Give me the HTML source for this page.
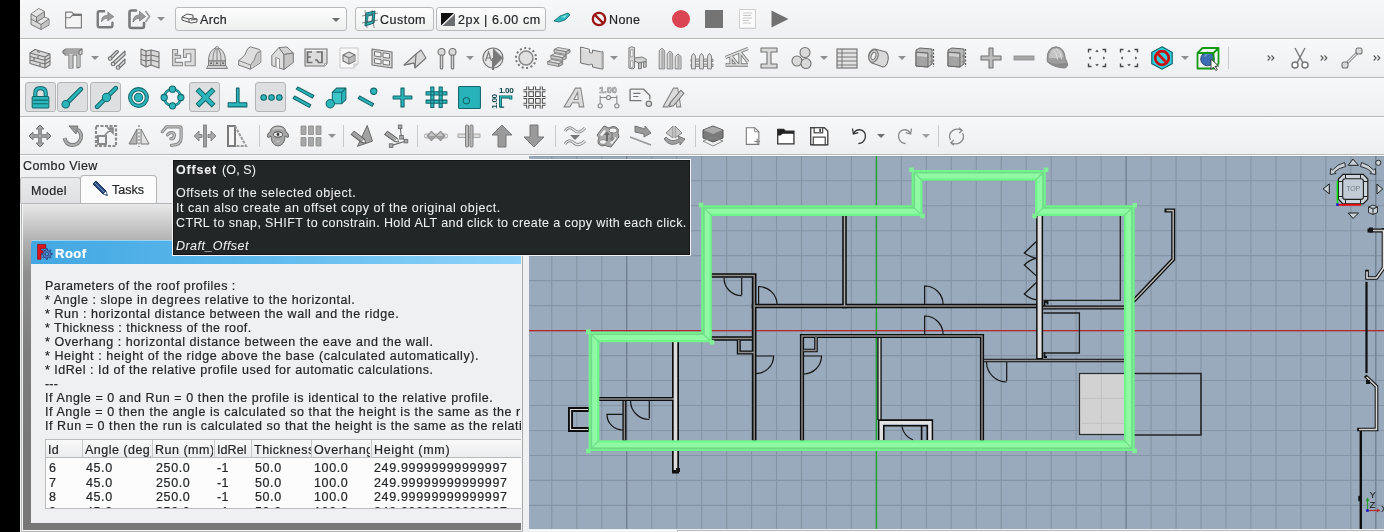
<!DOCTYPE html>
<html><head><meta charset="utf-8">
<style>
*{margin:0;padding:0;box-sizing:border-box}
html{will-change:transform}
html,body{width:1384px;height:532px;overflow:hidden;background:#eff0f1;font-family:"Liberation Sans",sans-serif;font-size:12.5px;letter-spacing:0.42px;color:#232627;position:relative}
.a{position:absolute;white-space:nowrap}
.t{line-height:15px;will-change:transform;-webkit-text-stroke:0.2px currentColor}
.row{position:absolute;left:20px;width:1364px;background:linear-gradient(#f7f8f9,#eeeff0)}
.sep{position:absolute;left:20px;width:1364px;height:2px;background:#b6b8b7;border-bottom:1px solid #fcfcfc;height:2px}
.ic{position:absolute;overflow:visible}
.dd{position:absolute;width:0;height:0;border-left:4px solid transparent;border-right:4px solid transparent;border-top:4px solid #8d8f90}
.vs{position:absolute;width:1px;height:22px;background:#c9cacb}
.btn{position:absolute;border:1px solid #b9babb;border-radius:3px;background:linear-gradient(#fdfdfd,#eeefef)}
.pr{position:absolute;border:1px solid #b4b5b6;border-radius:3px;background:#dedfe0}
</style></head><body>

<div class="a" style="left:0;top:0;width:20px;height:532px;background:#000"></div>
<div class="row" style="top:0;height:38px"></div><div class="row" style="top:39px;height:38px"></div><div class="row" style="top:78px;height:38px"></div><div class="row" style="top:117px;height:37px"></div>
<div class="sep" style="top:38px"></div><div class="sep" style="top:77px"></div><div class="sep" style="top:116px"></div><div class="sep" style="top:154px"></div>
<svg class="ic" style="left:28.0px;top:7.0px" width="24" height="24" viewBox="0 0 24 24"><path fill="#d6d6d6" stroke="#767676" stroke-width="1" stroke-linejoin="round" d="M3 7 L10.7 1.5 L16.5 4.5 L16.5 10 L21 12 L21 18 L13 22.5 L3 17.5 Z"/><path fill="#e6e6e6" d="M3.5 7 L10.7 2 L16 4.7 L8.5 9.7Z M9 15 L16.5 10.5 L20.5 12.3 L13 17Z"/><path fill="#c2c2c2" d="M9 10.3 L16 5.5 V10 L9 14.7Z M13.5 17.8 L20.5 12.8 V17.7 L13.5 22Z"/><path fill="none" stroke="#767676" stroke-width="1" stroke-linejoin="round" d="M3 7 L8.5 10 L16.5 4.5 M8.5 10 V15 L3 12 M8.5 15 L16.5 10 M8.5 15 L13 17.5 L21 12 M13 17.5 V22.5"/></svg>
<svg class="ic" style="left:62.5px;top:8.5px" width="21" height="21" viewBox="0 0 24 24"><path fill="#f4f4f4" stroke="#7a7a7a" stroke-width="1.3" d="M3 3.5 H10 L12.5 6 H21 V21.5 H3 Z"/><path fill="none" stroke="#7a7a7a" stroke-width="1.3" d="M3 10 H8 L11.5 6.5"/><rect x="11" y="5.5" width="10" height="2.5" fill="#777"/></svg>
<svg class="ic" style="left:95.0px;top:8.0px" width="22" height="22" viewBox="0 0 24 24"><path fill="none" stroke="#7a7a7a" stroke-width="2.6" stroke-linecap="round" d="M10 3.5 H5 Q3 3.5 3 5.5 V19 Q3 21 5 21 H17 Q19 21 19 19 V16"/><path fill="#9a9a9a" stroke="#7a7a7a" stroke-width="0.8" d="M7 15 Q7 8 14 8 V4.5 L20.5 9.5 L14 14 V11 Q10 11 7 15 Z"/></svg>
<svg class="ic" style="left:127.0px;top:7.0px" width="24" height="24" viewBox="0 0 24 24"><path fill="none" stroke="#7a7a7a" stroke-width="2.6" stroke-linecap="round" d="M9 3.5 H4.5 Q2.5 3.5 2.5 5.5 V19 Q2.5 21 4.5 21 H15 Q17 21 17 19 V16"/><path fill="#9a9a9a" stroke="#7a7a7a" stroke-width="0.8" d="M6 15 Q6 8 12.5 8 V4.5 L18.5 9.5 L12.5 14 V11 Q9 11 6 15 Z"/><path fill="none" stroke="#9a9a9a" stroke-width="1.6" d="M18.5 4 L22.5 9.5 L18.5 15"/></svg>
<div class="dd" style="left:157.0px;top:17.0px;border-top-color:#8d8f90"></div>
<div class="btn" style="left:175px;top:7px;width:172px;height:24px"></div>
<svg class="ic" style="left:181px;top:12px" width="17" height="12" viewBox="0 0 17 12"><path fill="#f4f4f4" stroke="#555" stroke-width="1" d="M1 5 L6 2 L12 3 L12 6 L16 7 L16 10 L10 11 L1 8 Z M1 5 L8 7 L12 6 M8 7 V10 M10 8 L16 7"/></svg>
<div class="a t" style="left:200px;top:13px;letter-spacing:0.346px;">Arch</div>
<div class="dd" style="left:331.5px;top:17.5px;border-top-color:#6b6b6b"></div>
<div class="btn" style="left:355px;top:7px;width:79px;height:24px"></div>
<svg class="ic" style="left:361px;top:10px" width="18" height="18" viewBox="0 0 18 18"><path fill="#2bb6bc" stroke="#13666b" stroke-width="1" d="M5 3 L14 1 L13 13 L4 16 Z"/><path fill="#f0f0f0" stroke="#13666b" stroke-width="0.8" d="M7 6 L11.5 5 L11 11 L6.5 12.5 Z"/><path stroke="#444" stroke-width="0.6" fill="none" d="M1 6 L17 3 M1 13 L17 10 M4 0 L6 18 M11 0 L13 18"/></svg>
<div class="a t" style="left:380px;top:13px;letter-spacing:0.485px;">Custom</div>
<div class="btn" style="left:436px;top:7px;width:110px;height:24px"></div>
<svg class="ic" style="left:441px;top:13px" width="14" height="13" viewBox="0 0 14 13"><path fill="#111" d="M0 0 H13 L0 12.5 Z"/><path fill="#6b6e71" d="M14 1 V13 H1.5 Z"/></svg>
<div class="a t" style="left:458px;top:13px;letter-spacing:0.618px;">2px | 6.00 cm</div>
<svg class="ic" style="left:553px;top:12px" width="18" height="12" viewBox="0 0 18 12"><path fill="#2bb6bc" stroke="#13666b" stroke-width="0.8" d="M1 9 L7 4 L15 1 L17 3 L12 8 L6 10 Z"/><path fill="#7fe0e4" d="M8 5 L14 2.5 L12 6 Z"/></svg>
<svg class="ic" style="left:591px;top:11px" width="16" height="16" viewBox="0 0 16 16"><circle cx="8" cy="8" r="6.2" fill="none" stroke="#9c1717" stroke-width="2.3"/><path stroke="#9c1717" stroke-width="2.3" d="M3.6 3.6 L12.4 12.4"/></svg>
<div class="a t" style="left:609px;top:13px;letter-spacing:0.357px;">None</div>
<div class="a" style="left:672px;top:10px;width:18px;height:18px;border-radius:50%;background:#da4453"></div>
<div class="a" style="left:705px;top:10px;width:18px;height:18px;background:#747474"></div>
<svg class="ic" style="left:739px;top:9px" width="17" height="20" viewBox="0 0 17 20"><path fill="#fbfbfb" stroke="#cfcfcf" stroke-width="1" d="M0.5 0.5 H16.5 V19.5 H0.5 Z"/><path fill="#ececec" d="M1 18 H16 V19 H1Z"/><path stroke="#c8c8c8" stroke-width="1" d="M4 4 H13 M4 6.5 H12 M4 9 H13 M4 11.5 H10 M4 14 H12"/></svg>
<svg class="ic" style="left:771px;top:10px" width="18" height="18" viewBox="0 0 18 18"><path fill="#717171" d="M0.5 0.5 L17.5 9 L0.5 17.5 Z"/></svg>
<svg class="ic" style="left:27.5px;top:46.0px" width="24" height="24" viewBox="0 0 24 24"><path fill="#d9d9d9" stroke="#737373" stroke-width="1.1" stroke-linejoin="round" d="M2 7 L7 3.5 L22 8 L22 19 L17 22 L2 17.5 Z"/><path fill="none" stroke="#747474" stroke-width="1.2" stroke-linejoin="round" d="M2 7 L17 11 L22 8 M17 11 V22 M2 10.5 L17 14.5 L22 11.5 M2 14 L17 18 L22 15 M9 5.5 L12 6.5 M10 9 V12.5 M6 12 V15.5 M12 16 V20"/></svg>
<svg class="ic" style="left:61.0px;top:46.0px" width="24" height="24" viewBox="0 0 24 24"><path fill="#d9d9d9" stroke="#737373" stroke-width="1.1" stroke-linejoin="round" d="M2 5 L5 3 L21 3 L21 8 L19 9 L19 21 L16 22 L16 9 L12 9 L12 22 L8 22 L8 9 L4 9 L4 8 L2 7 Z"/><path fill="none" stroke="#747474" stroke-width="1.2" stroke-linejoin="round" d="M2 5 L18 5 L21 3 M18 5 V9 M2 7 L18 7"/><rect x="8.5" y="9" width="2.5" height="13" fill="#c2c2c2"/><rect x="16.5" y="9" width="2" height="12" fill="#c2c2c2"/></svg>
<svg class="ic" style="left:105.7px;top:46.0px" width="24" height="24" viewBox="0 0 24 24"><path fill="#d9d9d9" stroke="#737373" stroke-width="1.1" stroke-linejoin="round" d="M3 12 L10 5 Q12 4 12.5 6 L5.5 13 Q4 14.5 3 12 Z"/><path fill="#d9d9d9" stroke="#737373" stroke-width="1.1" stroke-linejoin="round" d="M6 17 L19 5 L19 9 L8 19 Q6 20 6 17 Z"/><path fill="#d9d9d9" stroke="#737373" stroke-width="1.1" stroke-linejoin="round" d="M11 21 L19 13 L19 17 L13 22.5 Q11 23.5 11 21 Z"/><circle cx="4.2" cy="12.5" r="1.8" fill="#d9d9d9" stroke="#737373" stroke-width="1.1" stroke-linejoin="round"/><circle cx="7" cy="18" r="1.8" fill="#d9d9d9" stroke="#737373" stroke-width="1.1" stroke-linejoin="round"/><circle cx="12" cy="21.5" r="1.8" fill="#d9d9d9" stroke="#737373" stroke-width="1.1" stroke-linejoin="round"/></svg>
<svg class="ic" style="left:138.0px;top:46.0px" width="24" height="24" viewBox="0 0 24 24"><path fill="#d9d9d9" stroke="#737373" stroke-width="1.1" stroke-linejoin="round" d="M3 3 L8 5 L13 4 L21 6 L21 22 L13 19 L8 21 L3 18 Z"/><path fill="none" stroke="#747474" stroke-width="1.2" stroke-linejoin="round" d="M8 5 V21 M13 4 V19 M3 8.5 L8 10 L13 9 L21 11 M3 13.5 L8 15 L13 14 L21 16"/></svg>
<svg class="ic" style="left:172.0px;top:46.0px" width="24" height="24" viewBox="0 0 24 24"><path fill="#dcdcdc" stroke="#8a8a8a" stroke-width="1.1" stroke-linejoin="round" d="M0.6 3.5 H5.6 V7.7 H3.2 V9.4 H8.7 V12.2 H3.2 V16.4 H10.5 V19.8 H0.6 Z"/><path fill="#dcdcdc" stroke="#8a8a8a" stroke-width="1.1" stroke-linejoin="round" d="M11.5 3.2 H23.2 V19.8 H13.1 V15.7 H18.8 V7.7 H14.3 V11.5 H11.5 Z"/></svg>
<svg class="ic" style="left:205.0px;top:46.0px" width="24" height="24" viewBox="0 0 24 24"><path fill="#dadada" stroke="#7a7a7a" stroke-width="1" d="M3.5 15 Q3.5 4 12 1.2 Q20.5 4 20.5 15 Z"/><path fill="none" stroke="#7a7a7a" stroke-width="0.9" d="M12 1.2 V15 M8 15 Q7.5 6 12 1.2 M16 15 Q16.5 6 12 1.2"/><rect x="3.5" y="15" width="17" height="4.5" fill="#c4c4c4" stroke="#7a7a7a" stroke-width="0.9"/><path fill="none" stroke="#8a8a8a" stroke-width="0.8" d="M8.5 15 V19.5 M15.5 15 V19.5"/><circle cx="6" cy="17.2" r="0.9" fill="#555"/><circle cx="12" cy="17.2" r="0.9" fill="#555"/><circle cx="18" cy="17.2" r="0.9" fill="#555"/><path fill="#d0d0d0" stroke="#7a7a7a" stroke-width="0.9" d="M3 19.5 H21 L22.5 22.5 H1.5 Z"/><ellipse cx="12" cy="1.8" rx="1.6" ry="1.2" fill="#ddd" stroke="#7a7a7a" stroke-width="0.8"/></svg>
<svg class="ic" style="left:238.0px;top:46.0px" width="24" height="24" viewBox="0 0 24 24"><path fill="#dedede" stroke="#7a7a7a" stroke-width="1" stroke-linejoin="round" d="M0.7 14.5 L5.5 10.5 Q7.5 8.5 8.5 5 Q9.5 2 12.5 0.8 L21.5 3.5 L22.8 5.5 V16.5 L12.5 23.2 L0.7 19 Z"/><path fill="#c8c8c8" d="M12.8 19.2 Q17 14 18 9 Q19 5.8 22.4 5.6 V16.3 L12.8 22.7 Z"/><path fill="none" stroke="#7a7a7a" stroke-width="0.9" d="M0.7 14.5 L12.5 19 V23.2 M12.5 19 Q17 14 18 9 Q19 5.5 22.8 5.5"/></svg>
<svg class="ic" style="left:270.7px;top:46.0px" width="24" height="24" viewBox="0 0 24 24"><path fill="#dedede" stroke="#7a7a7a" stroke-width="1" stroke-linejoin="round" d="M0.8 9.5 L8 1.5 L13 8.5 V23.5 L0.8 19.5 Z"/><path fill="#d2d2d2" stroke="#7a7a7a" stroke-width="1" stroke-linejoin="round" d="M8 1.5 L16 1 L22.3 7 L13 8.5 Z"/><path fill="#c6c6c6" stroke="#7a7a7a" stroke-width="1" stroke-linejoin="round" d="M13 8.5 L22.3 7 V16.5 L13 23.5 Z"/><path fill="#fff" stroke="#8a8a8a" stroke-width="0.9" d="M4.5 21 V11.5 L8.5 12.8 V22.3"/><path fill="#b8b8b8" d="M4.5 11.5 L6 12 V21.5 L4.5 21Z"/></svg>
<svg class="ic" style="left:303.8px;top:46.0px" width="24" height="24" viewBox="0 0 24 24"><path fill="#dcdcdc" stroke="#777" stroke-width="1.1" d="M1 3 H23 V17.5 L20.5 20 H1 Z"/><path fill="#eee" stroke="#999" stroke-width="0.8" d="M20.5 20 V17.5 H23"/><path fill="#f2f2f2" d="M2 4 H22 V5 H2Z"/><path fill="none" stroke="#6e6e6e" stroke-width="1.7" d="M8 6 H3.5 V16.5 H8.5 M3.5 11 H7 M12.5 6 H18 V16.5 H14.5 L13 14 H11"/></svg>
<svg class="ic" style="left:337.0px;top:46.0px" width="24" height="24" viewBox="0 0 24 24"><path fill="#fafafa" stroke="#c8c8c8" stroke-width="1" d="M3 2 H21 V18 L17 22 H3 Z"/><path fill="#e0e0e0" stroke="#bbb" stroke-width="0.8" d="M17 22 V18 H21"/><path fill="#d9d9d9" stroke="#737373" stroke-width="1.1" stroke-linejoin="round" d="M6 9 L12 6 L18 9 L18 15 L12 18 L6 15 Z"/><path fill="none" stroke="#747474" stroke-width="1.2" stroke-linejoin="round" d="M6 9 L12 12 L18 9 M12 12 V18"/><path fill="#b8b8b8" d="M12.5 12.3 L17.5 9.7 V14.7 L12.5 17.3 Z"/></svg>
<svg class="ic" style="left:369.6px;top:46.0px" width="24" height="24" viewBox="0 0 24 24"><path fill="#d9d9d9" stroke="#737373" stroke-width="1.1" stroke-linejoin="round" d="M2 3 L22 6 V22 L2 19 Z"/><path fill="#f2f2f2" stroke="#777" stroke-width="1" d="M4.5 5.5 L11 6.5 V11 L4.5 10 Z M13 6.8 L19.5 7.8 V12.3 L13 11.3 Z M4.5 12.5 L11 13.5 V18 L4.5 17 Z M13 13.8 L19.5 14.8 V19.3 L13 18.3 Z"/></svg>
<svg class="ic" style="left:402.7px;top:46.0px" width="24" height="24" viewBox="0 0 24 24"><path fill="#d9d9d9" stroke="#737373" stroke-width="1.1" stroke-linejoin="round" d="M1 19 L13 8 L18 4 L23 12 L12 22 L11 17 L2 19 Z"/><path fill="none" stroke="#747474" stroke-width="1.2" stroke-linejoin="round" d="M13 8 L12 22 M1 19 L11 17"/></svg>
<svg class="ic" style="left:435.4px;top:46.0px" width="24" height="24" viewBox="0 0 24 24"><circle cx="6.5" cy="6" r="3.5" fill="#d9d9d9" stroke="#737373" stroke-width="1.1" stroke-linejoin="round"/><circle cx="17.5" cy="6" r="3.5" fill="#d9d9d9" stroke="#737373" stroke-width="1.1" stroke-linejoin="round"/><rect x="5.3" y="9" width="2.4" height="14" rx="1" fill="#d9d9d9" stroke="#737373" stroke-width="1.1" stroke-linejoin="round"/><rect x="16.3" y="9" width="2.4" height="14" rx="1" fill="#d9d9d9" stroke="#737373" stroke-width="1.1" stroke-linejoin="round"/></svg>
<svg class="ic" style="left:480.5px;top:46.0px" width="24" height="24" viewBox="0 0 24 24"><circle cx="12" cy="12" r="10" fill="#e6e6e6" stroke="#777" stroke-width="1.2"/><path fill="#7a7a7a" d="M12 2 L22 12 L12 22 Z"/><path fill="#7a7a7a" d="M11 12 H13 V24 H11Z"/><path fill="none" stroke="#777" stroke-width="1.1" d="M4.5 15 L7.5 6 L10.5 15 M5.5 12 H9.5"/></svg>
<svg class="ic" style="left:514.0px;top:46.0px" width="24" height="24" viewBox="0 0 24 24"><circle cx="12" cy="12" r="7" fill="#e0e0e0" stroke="#888" stroke-width="1.5"/><circle cx="12" cy="12" r="10" fill="none" stroke="#777" stroke-width="2" stroke-dasharray="2 2.5"/></svg>
<svg class="ic" style="left:547.0px;top:46.0px" width="24" height="24" viewBox="0 0 24 24"><path fill="#e2e2e2" stroke="#7a7a7a" stroke-width="0.9" stroke-linejoin="round" d="M7 3.5 L11 1.5 L23 3.7 L19 5.7 Z"/><path fill="#cdcdcd" stroke="#7a7a7a" stroke-width="0.9" stroke-linejoin="round" d="M7 3.5 L19 5.7 L19 8.5 L7 6.3 Z"/><path fill="#b8b8b8" stroke="#7a7a7a" stroke-width="0.9" stroke-linejoin="round" d="M19 5.7 L23 3.7 L23 6.5 L19 8.5 Z"/><path fill="#e2e2e2" stroke="#7a7a7a" stroke-width="0.9" stroke-linejoin="round" d="M3.8 9.5 L7.8 7.5 L19.3 9.7 L15.3 11.7 Z"/><path fill="#cdcdcd" stroke="#7a7a7a" stroke-width="0.9" stroke-linejoin="round" d="M3.8 9.5 L15.3 11.7 L15.3 14.5 L3.8 12.3 Z"/><path fill="#b8b8b8" stroke="#7a7a7a" stroke-width="0.9" stroke-linejoin="round" d="M15.3 11.7 L19.3 9.7 L19.3 12.5 L15.3 14.5 Z"/><path fill="#e2e2e2" stroke="#7a7a7a" stroke-width="0.9" stroke-linejoin="round" d="M0.7 15.5 L4.7 13.5 L15.7 15.7 L11.7 17.7 Z"/><path fill="#cdcdcd" stroke="#7a7a7a" stroke-width="0.9" stroke-linejoin="round" d="M0.7 15.5 L11.7 17.7 L11.7 20.5 L0.7 18.3 Z"/><path fill="#b8b8b8" stroke="#7a7a7a" stroke-width="0.9" stroke-linejoin="round" d="M11.7 17.7 L15.7 15.7 L15.7 18.5 L11.7 20.5 Z"/></svg>
<svg class="ic" style="left:580.0px;top:46.0px" width="24" height="24" viewBox="0 0 24 24"><path fill="#dadada" stroke="#737373" stroke-width="1" stroke-linejoin="round" d="M0.6 1 L9.5 3.3 V6.5 Q11.2 7.5 12.5 6.8 V4 L21.5 6 L23 5.8 V23 L21.5 23 L12.5 21 V18.5 Q11 17.5 9.5 18.8 V19 L0.6 17 Z"/><path fill="#a8a8a8" d="M21.5 6.3 L22.6 6.1 V22.6 L21.5 22.6Z"/><path fill="#f2f2f2" d="M1.5 2 L9 4 V5 L1.5 3Z"/></svg>
<svg class="ic" style="left:624.6px;top:46.0px" width="24" height="24" viewBox="0 0 24 24"><path fill="#d8d8d8" stroke="#737373" stroke-width="0.9" stroke-linejoin="round" d="M3.9 2 L6.5 0.8 L9.5 1.5 V22 L7.5 23 L3.9 22 Z"/><path fill="#f4f4f4" stroke="#8a8a8a" stroke-width="0.7" d="M5.5 4 L8 3.6 V10.5 L5.5 11 Z M5.5 15 L8 14.6 V21.5 L5.5 21.8Z"/><path fill="#cfcfcf" stroke="#737373" stroke-width="0.9" stroke-linejoin="round" d="M9.5 12 L17 11 L21.2 13 V15.5 L13.5 17 L9.5 15 Z"/><path fill="#bfbfbf" stroke="#737373" stroke-width="0.9" stroke-linejoin="round" d="M13.5 17 V22.9 L16.5 22.5 V16.4 Z M18.5 16 V21.5 L21.2 21 V15.5 Z"/></svg>
<svg class="ic" style="left:657.8px;top:46.0px" width="24" height="24" viewBox="0 0 24 24"><path fill="#dadada" stroke="#7a7a7a" stroke-width="0.9" stroke-linejoin="round" d="M1.2 4.7 L3.95 2.2 L6.7 4.7 V22.9 H1.2 Z"/><path fill="#bdbdbd" d="M3.95 3.2 L6.2 5.0 V22.5 H3.95 Z"/><path stroke="#8a8a8a" stroke-width="0.7" d="M3.95 4.2 V22.9"/><path fill="#dadada" stroke="#7a7a7a" stroke-width="0.9" stroke-linejoin="round" d="M9.2 7.5 L11.95 5 L14.7 7.5 V22.9 H9.2 Z"/><path fill="#bdbdbd" d="M11.95 6 L14.2 7.8 V22.5 H11.95 Z"/><path stroke="#8a8a8a" stroke-width="0.7" d="M11.95 7 V22.9"/><path fill="#dadada" stroke="#7a7a7a" stroke-width="0.9" stroke-linejoin="round" d="M17.2 10.5 L20.099999999999998 8 L23.0 10.5 V22.9 H17.2 Z"/><path fill="#bdbdbd" d="M20.099999999999998 9 L22.5 10.8 V22.5 H20.099999999999998 Z"/><path stroke="#8a8a8a" stroke-width="0.7" d="M20.099999999999998 10 V22.9"/></svg>
<svg class="ic" style="left:690.3px;top:46.0px" width="24" height="24" viewBox="0 0 24 24"><path fill="#cfcfcf" stroke="#7a7a7a" stroke-width="0.8" d="M1 13 H23 V15.5 H1 Z M1 18 H23 V20.5 H1 Z"/><path fill="#dadada" stroke="#7a7a7a" stroke-width="0.9" stroke-linejoin="round" d="M1.5 10 L3.5 7.4 L5.5 10 V22.9 H1.5 Z"/><path fill="#dadada" stroke="#7a7a7a" stroke-width="0.9" stroke-linejoin="round" d="M9.5 10 L11.5 7.4 L13.5 10 V22.9 H9.5 Z"/><path fill="#dadada" stroke="#7a7a7a" stroke-width="0.9" stroke-linejoin="round" d="M17.5 10 L19.5 7.4 L21.5 10 V22.9 H17.5 Z"/></svg>
<svg class="ic" style="left:723.5px;top:46.0px" width="24" height="24" viewBox="0 0 24 24"><path fill="none" stroke="#7a7a7a" stroke-width="3.3" stroke-linejoin="round" d="M1.5 19 H24 M1.5 11.5 L24 2.5 M7 10 V19 M7 10 L14 19 M16 6 L24 16 M16 6 V19"/><path fill="none" stroke="#dedede" stroke-width="1.5" stroke-linejoin="round" d="M1.5 19 H24 M1.5 11.5 L24 2.5 M7 10 V19 M7 10 L14 19 M16 6 L24 16 M16 6 V19"/></svg>
<svg class="ic" style="left:757.0px;top:46.0px" width="24" height="24" viewBox="0 0 24 24"><path fill="#d9d9d9" stroke="#737373" stroke-width="1.1" stroke-linejoin="round" d="M4 2 H20 V6 H14 V18 H20 V22 H4 V18 H10 V6 H4 Z"/></svg>
<svg class="ic" style="left:789.7px;top:46.0px" width="24" height="24" viewBox="0 0 24 24"><circle cx="15" cy="6.5" r="5" fill="#d9d9d9" stroke="#737373" stroke-width="1.1" stroke-linejoin="round"/><circle cx="7" cy="15" r="5" fill="#d9d9d9" stroke="#737373" stroke-width="1.1" stroke-linejoin="round"/><circle cx="16" cy="17.5" r="5" fill="#d9d9d9" stroke="#737373" stroke-width="1.1" stroke-linejoin="round"/></svg>
<svg class="ic" style="left:834.8px;top:46.0px" width="24" height="24" viewBox="0 0 24 24"><rect x="2" y="3" width="20" height="19" fill="#e2e2e2" stroke="#777" stroke-width="1.2"/><path fill="none" stroke="#777" stroke-width="1" d="M2 7 H22 M2 11 H22 M2 15 H22 M2 19 H22 M7 3 V22"/></svg>
<svg class="ic" style="left:867.3px;top:46.0px" width="24" height="24" viewBox="0 0 24 24"><path fill="#d9d9d9" stroke="#737373" stroke-width="1.1" stroke-linejoin="round" d="M8 3 L19 6 Q23 10 20 18 Q18 21 16 21 L5 17 Q1 14 2 8 Q4 3 8 3 Z"/><ellipse cx="6.5" cy="10" rx="4.5" ry="6.5" transform="rotate(20 6.5 10)" fill="#d0d0d0" stroke="#777" stroke-width="1.1"/><ellipse cx="6.5" cy="10" rx="2.2" ry="3.8" transform="rotate(20 6.5 10)" fill="#f2f2f2" stroke="#777" stroke-width="1"/></svg>
<svg class="ic" style="left:912.5px;top:46.0px" width="24" height="24" viewBox="0 0 24 24"><path fill="#b9b9b9" stroke="#666" stroke-width="1" d="M3 4 L7 2 L19 3 L19 18 L15 21 L3 20 Z"/><path fill="#a3a3a3" stroke="#666" stroke-width="1" d="M3 6 L15 7 L15 21 L3 20 Z"/><path fill="#cfcfcf" d="M4 7 L14 8 L14 11 L4 10Z"/><path fill="none" stroke="#555" stroke-width="1.2" stroke-dasharray="2 1.5" d="M20.5 3 V21"/><path fill="none" stroke="#777" stroke-width="1" d="M17 10 H20 M17 16 H20"/></svg>
<svg class="ic" style="left:945.0px;top:46.0px" width="24" height="24" viewBox="0 0 24 24"><path fill="#b9b9b9" stroke="#666" stroke-width="1" d="M3 4 L7 2 L19 3 L19 18 L15 21 L3 20 Z"/><path fill="#a3a3a3" stroke="#666" stroke-width="1" d="M3 6 L15 7 L15 21 L3 20 Z"/><path fill="#cfcfcf" d="M4 7 L14 8 L14 11 L4 10Z"/><path fill="none" stroke="#555" stroke-width="1.2" stroke-dasharray="2 1.5" d="M20.5 3 V21"/><path fill="none" stroke="#777" stroke-width="1" d="M17 10 H20 M17 16 H20"/></svg>
<svg class="ic" style="left:978.5px;top:46.0px" width="24" height="24" viewBox="0 0 24 24"><path fill="#bdbdbd" stroke="#737373" stroke-width="1.1" stroke-linejoin="round" d="M10 2 H14 V10 H22 V14 H14 V22 H10 V14 H2 V10 H10 Z" fill="#a8a8a8"/></svg>
<svg class="ic" style="left:1011.8px;top:46.0px" width="24" height="24" viewBox="0 0 24 24"><rect x="2" y="10" width="20" height="4" fill="#a8a8a8" stroke="#8a8a8a" stroke-width="0.8"/></svg>
<svg class="ic" style="left:1044.5px;top:46.0px" width="24" height="24" viewBox="0 0 24 24"><path fill="#9e9e9e" stroke="#777" stroke-width="0.9" d="M2.2 14 Q1.5 1.5 11 0.8 Q19.5 1.2 20.3 12.5 L22.3 17 Q23.5 21.5 19 22 Q9 21.5 2.5 16 Z"/><path fill="#c4c4c4" d="M4 12 Q4 3 11 2.2 Q17 2.5 18.5 11 Q11 13 4 12Z"/><path fill="none" stroke="#e0e0e0" stroke-width="1" d="M8 3.5 Q12 7 12.5 13.5 M11.5 2.5 Q16 6 16.5 13"/><path fill="#8a8a8a" d="M2.5 15.5 Q10 19 20 17 L22 18 Q22 20.5 19 21 Q9 20.5 2.5 16Z"/></svg>
<svg class="ic" style="left:1084.8px;top:46.0px" width="24" height="24" viewBox="0 0 24 24"><path fill="none" stroke="#4a4a4a" stroke-width="1.4" d="M3.5 6.5 V3.5 H6.5 M17.5 3.5 H20.5 V6.5 M20.5 17.5 V20.5 H17.5 M6.5 20.5 H3.5 V17.5"/><path fill="none" stroke="#4a4a4a" stroke-width="1.1" d="M10.8 5.8 L12 4.6 L13.2 5.8 M10.8 18.2 L12 19.4 L13.2 18.2 M5.8 10.8 L4.6 12 L5.8 13.2 M18.2 10.8 L19.4 12 L18.2 13.2"/></svg>
<svg class="ic" style="left:1117.4px;top:46.0px" width="24" height="24" viewBox="0 0 24 24"><path fill="none" stroke="#4a4a4a" stroke-width="1.4" d="M3.5 6.5 V3.5 H6.5 M17.5 3.5 H20.5 V6.5 M20.5 17.5 V20.5 H17.5 M6.5 20.5 H3.5 V17.5"/><path fill="none" stroke="#4a4a4a" stroke-width="1.1" d="M10.8 5.8 L12 4.6 L13.2 5.8 M10.8 18.2 L12 19.4 L13.2 18.2 M5.8 10.8 L4.6 12 L5.8 13.2 M18.2 10.8 L19.4 12 L18.2 13.2"/></svg>
<svg class="ic" style="left:1150.4px;top:46.0px" width="24" height="24" viewBox="0 0 24 24"><path fill="#2bd2e0" stroke="#0b5a62" stroke-width="1.1" d="M12 0.8 L22.2 6.3 V17.7 L12 23.2 L1.8 17.7 V6.3 Z"/><circle cx="12" cy="12" r="6.8" fill="none" stroke="#d21414" stroke-width="2.8"/><path stroke="#d21414" stroke-width="2.8" d="M7.3 7.3 L16.7 16.7"/><circle cx="12" cy="12" r="6.8" fill="none" stroke="#6a0808" stroke-width="0.5" opacity="0.6"/></svg>
<svg class="ic" style="left:1195.7px;top:46.0px" width="24" height="24" viewBox="0 0 24 24"><circle cx="11.5" cy="13" r="6.8" fill="#3d6db3" stroke="#1b3461" stroke-width="0.8"/><path fill="#7fa6dd" d="M8 10 Q10 7.5 13 8 Q10 9 9 11Z"/><path fill="none" stroke="#129a12" stroke-width="1.8" stroke-linejoin="round" d="M1.5 7 H17.5 V22.5 H1.5 Z M1.5 7 L6.5 2 H22.5 V17.5 L17.5 22.5 M17.5 7 L22.5 2"/><path fill="#fff" stroke="#333" stroke-width="0.9" stroke-linejoin="round" d="M15 13 L15 23.5 L17.5 21 L19.8 24.5 L21.3 23.5 L19 20.2 L22.5 20 Z"/></svg>
<svg class="ic" style="left:1287.6px;top:46.0px" width="24" height="24" viewBox="0 0 24 24"><path fill="none" stroke="#777" stroke-width="1.4" d="M7 2 L15 17 M17 2 L9 17"/><circle cx="7" cy="19" r="3" fill="#fff" stroke="#777" stroke-width="1.5"/><circle cx="17" cy="19" r="3" fill="#fff" stroke="#777" stroke-width="1.5"/></svg>
<svg class="ic" style="left:1340.0px;top:46.0px" width="24" height="24" viewBox="0 0 24 24"><path stroke="#888" stroke-width="3" d="M5 19 L19 5"/><path stroke="#ddd" stroke-width="1.2" d="M5 19 L19 5"/><rect x="2" y="16" width="6" height="6" rx="2" fill="#d9d9d9" stroke="#737373" stroke-width="1.1" stroke-linejoin="round"/><rect x="16" y="2" width="6" height="6" rx="2" fill="#d9d9d9" stroke="#737373" stroke-width="1.1" stroke-linejoin="round"/></svg>
<div class="dd" style="left:91.0px;top:56.0px;border-top-color:#8d8f90"></div>
<div class="dd" style="left:466.0px;top:56.0px;border-top-color:#8d8f90"></div>
<div class="dd" style="left:609.8px;top:56.0px;border-top-color:#8d8f90"></div>
<div class="dd" style="left:820.0px;top:56.0px;border-top-color:#8d8f90"></div>
<div class="dd" style="left:897.7px;top:56.0px;border-top-color:#8d8f90"></div>
<div class="dd" style="left:1181.0px;top:56.0px;border-top-color:#8d8f90"></div>
<div class="vs" style="left:1228px;top:47px"></div>
<svg class="ic" style="left:1261.3px;top:48.0px" width="20" height="20" viewBox="0 0 24 24"><path fill="none" stroke="#555" stroke-width="1.3" d="M8 9 L11 12 L8 15 M12.5 9 L15.5 12 L12.5 15"/></svg>
<svg class="ic" style="left:1314.4px;top:48.0px" width="20" height="20" viewBox="0 0 24 24"><path fill="none" stroke="#555" stroke-width="1.3" d="M8 9 L11 12 L8 15 M12.5 9 L15.5 12 L12.5 15"/></svg>
<svg class="ic" style="left:1367.0px;top:48.0px" width="20" height="20" viewBox="0 0 24 24"><path fill="none" stroke="#555" stroke-width="1.3" d="M8 9 L11 12 L8 15 M12.5 9 L15.5 12 L12.5 15"/></svg>
<div class="pr" style="left:24.5px;top:82px;width:31px;height:30px"></div>
<div class="pr" style="left:57px;top:82px;width:31px;height:30px"></div>
<div class="pr" style="left:90px;top:82px;width:31px;height:30px"></div>
<div class="pr" style="left:189px;top:82px;width:31px;height:30px"></div>
<div class="pr" style="left:255px;top:82px;width:31px;height:30px"></div>
<svg class="ic" style="left:27.5px;top:84.5px" width="25" height="25" viewBox="0 0 24 24"><path fill="none" stroke="#13666b" stroke-width="4" d="M7 12 V8 Q7 3 12 3 Q17 3 17 8 V12"/><path fill="none" stroke="#2bb6bc" stroke-width="2.2" d="M7 12 V8 Q7 3 12 3 Q17 3 17 8 V12"/><rect x="4" y="11" width="16" height="11" rx="1" fill="#2bb6bc" stroke="#13666b" stroke-width="1" stroke-linejoin="round"/><path fill="none" stroke="#13666b" stroke-width="1" d="M5 14.5 H19 M5 18 H19"/></svg>
<svg class="ic" style="left:60.0px;top:84.5px" width="25" height="25" viewBox="0 0 24 24"><path stroke="#13666b" stroke-width="4.5" stroke-linecap="round" d="M6 18 L20 4"/><path stroke="#2bb6bc" stroke-width="2.6" stroke-linecap="round" d="M6 18 L20 4"/><circle cx="5.5" cy="18.5" r="3.6" fill="#2bb6bc" stroke="#13666b" stroke-width="1" stroke-linejoin="round"/></svg>
<svg class="ic" style="left:93.5px;top:84.5px" width="25" height="25" viewBox="0 0 24 24"><path stroke="#13666b" stroke-width="4.5" stroke-linecap="round" d="M3 21 L21 3"/><path stroke="#2bb6bc" stroke-width="2.6" stroke-linecap="round" d="M3 21 L21 3"/><circle cx="12" cy="12" r="4" fill="#2bb6bc" stroke="#13666b" stroke-width="1" stroke-linejoin="round"/></svg>
<svg class="ic" style="left:126.2px;top:84.5px" width="25" height="25" viewBox="0 0 24 24"><circle cx="12" cy="12" r="9.5" fill="#2bb6bc" stroke="#13666b" stroke-width="1" stroke-linejoin="round"/><circle cx="12" cy="12" r="6.5" fill="#f4f4f4" stroke="#13666b"/><circle cx="12" cy="12" r="4" fill="#2bb6bc" stroke="#13666b" stroke-width="1" stroke-linejoin="round"/></svg>
<svg class="ic" style="left:159.5px;top:84.5px" width="25" height="25" viewBox="0 0 24 24"><circle cx="12" cy="12" r="8" fill="none" stroke="#13666b" stroke-width="2.6"/><circle cx="12" cy="12" r="8" fill="none" stroke="#2bb6bc" stroke-width="1.2"/><circle cx="12" cy="4" r="3" fill="#2bb6bc" stroke="#13666b" stroke-width="1" stroke-linejoin="round"/><circle cx="12" cy="20" r="3" fill="#2bb6bc" stroke="#13666b" stroke-width="1" stroke-linejoin="round"/><circle cx="4" cy="12" r="3" fill="#2bb6bc" stroke="#13666b" stroke-width="1" stroke-linejoin="round"/><circle cx="20" cy="12" r="3" fill="#2bb6bc" stroke="#13666b" stroke-width="1" stroke-linejoin="round"/></svg>
<svg class="ic" style="left:192.5px;top:84.5px" width="25" height="25" viewBox="0 0 24 24"><path fill="#2bb6bc" stroke="#13666b" stroke-width="1" stroke-linejoin="round" d="M3 6 L6 3 L12 9 L18 3 L21 6 L15 12 L21 18 L18 21 L12 15 L6 21 L3 18 L9 12 Z"/></svg>
<svg class="ic" style="left:225.1px;top:84.5px" width="25" height="25" viewBox="0 0 24 24"><path fill="#2bb6bc" stroke="#13666b" stroke-width="1" stroke-linejoin="round" d="M11 3 H13.5 V17 H21 V21 H3 V17 H11 Z"/></svg>
<svg class="ic" style="left:258.5px;top:84.5px" width="25" height="25" viewBox="0 0 24 24"><circle cx="4.5" cy="12" r="2.7" fill="#2bb6bc" stroke="#13666b" stroke-width="1" stroke-linejoin="round"/><circle cx="12" cy="12" r="2.7" fill="#2bb6bc" stroke="#13666b" stroke-width="1" stroke-linejoin="round"/><circle cx="19.5" cy="12" r="2.7" fill="#2bb6bc" stroke="#13666b" stroke-width="1" stroke-linejoin="round"/></svg>
<svg class="ic" style="left:291.0px;top:84.5px" width="25" height="25" viewBox="0 0 24 24"><path fill="#2bb6bc" stroke="#13666b" stroke-width="1" stroke-linejoin="round" d="M5 4 L6.5 2 L22 10 L20.5 12.5 Z M2 13 L3.5 10.5 L19 19 L17.5 21.5 Z"/></svg>
<svg class="ic" style="left:324.2px;top:84.5px" width="25" height="25" viewBox="0 0 24 24"><path fill="#2bb6bc" stroke="#13666b" stroke-width="1" stroke-linejoin="round" d="M8 7 L12 3 H21 V14 L17 18 H8 Z"/><path fill="none" stroke="#13666b" stroke-width="1" d="M8 7 H17 V18 M17 7 L21 3"/><path fill="#4fd3d8" d="M8.5 7.5 H16.5 V17.5 H8.5Z" opacity="0.5"/><circle cx="6" cy="18" r="4" fill="#2bb6bc" stroke="#13666b" stroke-width="1" stroke-linejoin="round"/></svg>
<svg class="ic" style="left:356.0px;top:84.5px" width="25" height="25" viewBox="0 0 24 24"><path fill="#2bb6bc" stroke="#13666b" stroke-width="1" stroke-linejoin="round" d="M2 13 L3.5 10.5 L17 18 L15.5 20.5 Z"/><circle cx="17" cy="6" r="3" fill="#2bb6bc" stroke="#13666b" stroke-width="1" stroke-linejoin="round"/></svg>
<svg class="ic" style="left:390.3px;top:84.5px" width="25" height="25" viewBox="0 0 24 24"><path fill="#2bb6bc" stroke="#13666b" stroke-width="1" stroke-linejoin="round" d="M10.5 3 H13.5 V10.5 H21 V13.5 H13.5 V21 H10.5 V13.5 H3 V10.5 H10.5 Z"/></svg>
<svg class="ic" style="left:423.5px;top:84.5px" width="25" height="25" viewBox="0 0 24 24"><path fill="#2bb6bc" stroke="#13666b" stroke-width="1" stroke-linejoin="round" d="M6.5 2 H9.5 V21.5 H6.5Z M14.5 2 H17.5 V21.5 H14.5Z M2 6.5 H22 V9.5 H2Z M2 14.5 H22 V17.5 H2Z"/></svg>
<svg class="ic" style="left:456.5px;top:84.5px" width="25" height="25" viewBox="0 0 24 24"><rect x="1.5" y="1.5" width="21" height="21" rx="1" fill="#27b3b9" stroke="#13666b"/><circle cx="9" cy="15" r="3" fill="none" stroke="#13666b"/></svg>
<svg class="ic" style="left:488.5px;top:84.5px" width="25" height="25" viewBox="0 0 24 24"><path fill="none" stroke="#0f5458" stroke-width="2.8" d="M11 21 V11.5 H21 V14"/><path fill="none" stroke="#2ec4ca" stroke-width="1.2" d="M11 21 V11.5 H21 V14"/><path fill="none" stroke="#0f5458" stroke-width="1.2" d="M10 21.3 H14.5"/><text x="9.5" y="7.6" font-size="7.8" font-weight="bold" fill="#0f4448" font-family="Liberation Sans" letter-spacing="-0.3">1.00</text><text x="0" y="0" font-size="7.8" font-weight="bold" fill="#0f4448" font-family="Liberation Sans" letter-spacing="-0.3" transform="translate(7.3 22.8) rotate(-90)">1.00</text></svg>
<svg class="ic" style="left:522.3px;top:84.5px" width="25" height="25" viewBox="0 0 24 24"><path fill="none" stroke="#4a4a4a" stroke-width="3" d="M5.5 1.5 V22.5 M12 1.5 V22.5 M18.5 1.5 V22.5 M1.5 5.5 H22.5 M1.5 12 H22.5 M1.5 18.5 H22.5"/><path fill="none" stroke="#fafafa" stroke-width="1.1" d="M5.5 1.5 V22.5 M12 1.5 V22.5 M18.5 1.5 V22.5 M1.5 5.5 H22.5 M1.5 12 H22.5 M1.5 18.5 H22.5"/></svg>
<svg class="ic" style="left:561.5px;top:84.5px" width="25" height="25" viewBox="0 0 24 24"><path fill="#dcdcdc" stroke="#888" stroke-width="1" d="M2 21 L13 3 H18 L21 21 H16.5 L16 17 H10 L7.5 21 Z M11.5 14 H15.5 L15 7 Z"/></svg>
<svg class="ic" style="left:595.5px;top:84.5px" width="25" height="25" viewBox="0 0 24 24"><path fill="none" stroke="#888" stroke-width="1" d="M4 19 V10 M20 19 V10 M4 12 H20"/><circle cx="4" cy="20" r="2" fill="#eee" stroke="#888"/><circle cx="20" cy="20" r="2" fill="#eee" stroke="#888"/><circle cx="12" cy="12" r="2" fill="#eee" stroke="#888"/><text x="3" y="8" font-size="8" font-weight="bold" fill="#e8e8e8" stroke="#888" stroke-width="0.6" font-family="Liberation Sans">1.00</text></svg>
<svg class="ic" style="left:627.5px;top:84.5px" width="25" height="25" viewBox="0 0 24 24"><path fill="#f2f2f2" stroke="#777" stroke-width="1.3" d="M2 4 H15 L21 10 V14"/><path fill="none" stroke="#777" stroke-width="1.3" d="M2 4 V15 H13"/><path fill="none" stroke="#777" stroke-width="1.1" d="M5 8 H12 M5 11 H10"/><circle cx="20" cy="18" r="2.6" fill="#ddd" stroke="#777" stroke-width="1.2"/></svg>
<svg class="ic" style="left:661.1px;top:84.5px" width="25" height="25" viewBox="0 0 24 24"><path fill="#dcdcdc" stroke="#888" stroke-width="1" d="M2 21 L12 3 H16 L19 21 H15 L14.5 17 H9 L6.5 21 Z"/><path fill="#d0d0d0" stroke="#777" stroke-width="1" d="M9 17 L19 5 L22 8 L12 20 L8 21 Z"/></svg>
<svg class="ic" style="left:27.7px;top:124.0px" width="24" height="24" viewBox="0 0 24 24"><path fill="#a4a4a4" stroke="#7a7a7a" stroke-width="1" stroke-linejoin="round" d="M12 1 L16 5 H13.3 V10.7 H19 V8 L23 12 L19 16 V13.3 H13.3 V19 H16 L12 23 L8 19 H10.7 V13.3 H5 V16 L1 12 L5 8 V10.7 H10.7 V5 H8 Z"/></svg>
<svg class="ic" style="left:61.0px;top:124.0px" width="24" height="24" viewBox="0 0 24 24"><path fill="none" stroke="#7a7a7a" stroke-width="3.8" d="M16.5 5.5 Q21 9 20 14 Q18 21 11.5 21 Q5 21 3.5 14"/><path fill="none" stroke="#b0b0b0" stroke-width="1.8" d="M16.5 5.5 Q21 9 20 14 Q18 21 11.5 21 Q5 21 3.5 14"/><path fill="#999" stroke="#777" stroke-width="1" d="M8 2 L17 2 L15 10 Z"/></svg>
<svg class="ic" style="left:93.9px;top:124.0px" width="24" height="24" viewBox="0 0 24 24"><path fill="none" stroke="#8a8a8a" stroke-width="2.2" stroke-dasharray="3 1.5" d="M2 2 H22 V22 H2 Z"/><rect x="4" y="12" width="8" height="8" fill="none" stroke="#888" stroke-width="2"/><path fill="#999" d="M11 11 L18 4 M14 4 H19 V9 Z" stroke="#888" stroke-width="1.6"/></svg>
<svg class="ic" style="left:127.0px;top:124.0px" width="24" height="24" viewBox="0 0 24 24"><path fill="#b4b4b4" stroke="#777" d="M10 5 V20 H2 Z"/><path fill="#e2e2e2" stroke="#777" d="M14 5 V20 H22 Z"/><path fill="none" stroke="#999" stroke-width="1.5" stroke-dasharray="2 1.5" d="M12 1 V23"/></svg>
<svg class="ic" style="left:159.6px;top:124.0px" width="24" height="24" viewBox="0 0 24 24"><path fill="none" stroke="#858585" stroke-width="3.2" stroke-linecap="round" stroke-linejoin="round" d="M2.3 7.8 L6.5 2.9 H19.5 Q21.1 2.9 21.1 4.5 V14 Q21.1 21.3 11.4 21.3 M7.5 10.9 Q9.3 8.1 13.1 8.8 Q15.5 10.9 13.4 14 Q12 15.4 10.8 14.7"/><path fill="none" stroke="#c4c4c4" stroke-width="1.3" stroke-linecap="round" stroke-linejoin="round" d="M2.3 7.8 L6.5 2.9 H19.5 Q21.1 2.9 21.1 4.5 V14 Q21.1 21.3 11.4 21.3 M7.5 10.9 Q9.3 8.1 13.1 8.8 Q15.5 10.9 13.4 14 Q12 15.4 10.8 14.7"/></svg>
<svg class="ic" style="left:192.8px;top:124.0px" width="24" height="24" viewBox="0 0 24 24"><rect x="10.5" y="1" width="3" height="22" fill="#a0a0a0" stroke="#777" stroke-width="0.8"/><path fill="#a8a8a8" stroke="#777" stroke-width="0.8" d="M1 12 L6 7 V10.5 H9 V13.5 H6 V17 Z M23 12 L18 7 V10.5 H15 V13.5 H18 V17 Z"/></svg>
<svg class="ic" style="left:225.4px;top:124.0px" width="24" height="24" viewBox="0 0 24 24"><path fill="#f6f6f6" stroke="#7a7a7a" stroke-width="2" d="M3 2 H10 V22 H3 Z"/><path fill="none" stroke="#9a9a9a" stroke-width="2" d="M10 2 L21 22 H10" stroke-dasharray="3 1.2"/></svg>
<svg class="ic" style="left:266.0px;top:124.0px" width="24" height="24" viewBox="0 0 24 24"><path fill="#a6a6a6" stroke="#6a6a6a" stroke-width="1" d="M4 8 Q5 2 12 2 Q19 2 20 8 Q23 9 22.5 13 Q21 14 19 12 Q19 21 12 22 Q5 21 5 12 Q3 14 1.5 13 Q1 9 4 8 Z"/><path fill="#c8c8c8" d="M6 6 Q8 3 12 3 Q16 3 18 6 Q15 5 12 5 Q9 5 6 6Z"/><ellipse cx="12" cy="10.5" rx="4.5" ry="2.6" fill="#f0f0f0" stroke="#444"/><circle cx="12" cy="10.5" r="1.4" fill="#333"/><path fill="#d6d6d6" d="M9 16 Q12 20 15 16 Q12 18 9 16Z"/></svg>
<svg class="ic" style="left:298.7px;top:124.0px" width="24" height="24" viewBox="0 0 24 24"><path fill="#a8a8a8" stroke="#8a8a8a" stroke-width="0.8" d="M2 2 H7 V10.5 H2Z M9.5 2 H14.5 V10.5 H9.5Z M17 2 H22 V10.5 H17Z M2 13.5 H7 V22 H2Z M9.5 13.5 H14.5 V22 H9.5Z M17 13.5 H22 V22 H17Z"/></svg>
<svg class="ic" style="left:349.3px;top:124.0px" width="24" height="24" viewBox="0 0 24 24"><path fill="#a2a2a2" stroke="#6a6a6a" stroke-width="1" stroke-linejoin="round" d="M18.2 1.5 L23.5 17.1 L8.5 22.3 Z"/><path fill="#8a8a8a" stroke="#555" stroke-width="0.9" stroke-linejoin="round" d="M2 10.5 L5 7.2 L15.5 15 L16.5 19 L12.5 18.5 Z"/><path fill="none" stroke="#c8c8c8" stroke-width="0.7" d="M3.5 9.5 L13.5 16.5 M4.5 8.4 L14.5 15.6"/><path fill="#fff" d="M12.8 17.6 L15.2 15.8 L16 18.5Z"/></svg>
<svg class="ic" style="left:383.6px;top:124.0px" width="24" height="24" viewBox="0 0 24 24"><path fill="none" stroke="#6a6a6a" stroke-width="1.1" d="M16.1 2.9 L17.5 13.3 L22 17.1 L7.1 21.6"/><rect x="14.3" y="1" width="3.6" height="3.6" fill="#a8a8a8" stroke="#666" stroke-width="0.8"/><rect x="15.7" y="11.5" width="3.6" height="3.6" fill="#a8a8a8" stroke="#666" stroke-width="0.8"/><rect x="20.2" y="15.3" width="3.6" height="3.6" fill="#a8a8a8" stroke="#666" stroke-width="0.8"/><rect x="5.3" y="19.8" width="3.6" height="3.6" fill="#a8a8a8" stroke="#666" stroke-width="0.8"/><path fill="#8a8a8a" stroke="#555" stroke-width="0.9" stroke-linejoin="round" d="M0.5 10.5 L3.5 7.2 L13.5 14.5 L14.5 18 L10.5 17.5 Z"/><path fill="none" stroke="#c8c8c8" stroke-width="0.7" d="M2 9.5 L11.5 16.3 M3 8.4 L12.5 15.2"/><path fill="#fff" d="M10.8 16.6 L13.2 14.8 L14 17.5Z"/></svg>
<svg class="ic" style="left:424.0px;top:124.0px" width="24" height="24" viewBox="0 0 24 24"><rect x="0.5" y="10" width="23" height="4" rx="1.5" fill="#e6e6e6" stroke="#9a9a9a" stroke-width="0.8"/><path fill="#a0a0a0" stroke="#7a7a7a" stroke-width="0.7" d="M12 12 L7.5 7 L3 12 L7.5 17Z M12 12 L16.5 7 L21 12 L16.5 17Z"/><path fill="#c8c8c8" d="M11 12 L7.5 8.5 L5 12Z M13 12 L16.5 8.5 L19 12Z"/></svg>
<svg class="ic" style="left:456.5px;top:124.0px" width="24" height="24" viewBox="0 0 24 24"><rect x="1" y="10" width="22" height="3.5" fill="#ddd" stroke="#999" stroke-width="0.8"/><rect x="8.5" y="1" width="3" height="22" rx="1" fill="#bbb" stroke="#777" stroke-width="0.9"/><rect x="13" y="1" width="3" height="22" rx="1" fill="#bbb" stroke="#777" stroke-width="0.9"/></svg>
<svg class="ic" style="left:489.9px;top:124.0px" width="24" height="24" viewBox="0 0 24 24"><path fill="#9a9a9a" stroke="#777" stroke-width="1" d="M12 1 L22 11 H16 V23 H8 V11 H2 Z"/></svg>
<svg class="ic" style="left:522.4px;top:124.0px" width="24" height="24" viewBox="0 0 24 24"><path fill="#9a9a9a" stroke="#777" stroke-width="1" d="M12 23 L22 13 H16 V1 H8 V13 H2 Z"/></svg>
<svg class="ic" style="left:562.7px;top:124.0px" width="24" height="24" viewBox="0 0 24 24"><path fill="none" stroke="#8a8a8a" stroke-width="3" d="M2 7 Q6 1 11 6 Q16 11 22 4 M2 20 Q6 14 11 19 Q16 23 22 17"/><path fill="none" stroke="#eee" stroke-width="1.2" d="M2 7 Q6 1 11 6 Q16 11 22 4 M2 20 Q6 14 11 19 Q16 23 22 17"/><path fill="#777" d="M7 11 H17 L12 16 Z"/></svg>
<svg class="ic" style="left:596.0px;top:124.0px" width="24" height="24" viewBox="0 0 24 24"><path fill="#a8a8a8" stroke="#6e6e6e" stroke-width="1" stroke-linejoin="round" d="M1 11 L8 2 L13 4 Q16 1.5 20 3 Q23.5 5 22 9 L23 13 L15 23 L9 21.5 Q5 23 2.5 20 Q1 17 3 14 Z"/><ellipse cx="17" cy="6.5" rx="4" ry="2.6" fill="#f0f0f0" stroke="#777" stroke-width="0.8"/><ellipse cx="7" cy="18" rx="3.6" ry="2.4" fill="#f0f0f0" stroke="#777" stroke-width="0.8"/><path fill="#f4f4f4" d="M4 11 L8 6 L10 7 L6 12Z M14 19 L19 13 L20.5 14 L16 20Z"/><path fill="#6a6a6a" d="M10 17 V11 H8 L11 7.5 L14 11 H12 V17Z"/><path fill="#888" d="M15 8 V14 H13 L16 17.5 L19 14 H17 V8Z"/></svg>
<svg class="ic" style="left:629.4px;top:124.0px" width="24" height="24" viewBox="0 0 24 24"><path fill="#999" stroke="#777" stroke-width="1" d="M6 2 L16 5 L16 2 L22 9 L15 13 L15 10 L6 8 Z"/><path fill="#fff" stroke="#999" stroke-width="1.6" d="M1 13 L22 21"/></svg>
<svg class="ic" style="left:662.0px;top:124.0px" width="24" height="24" viewBox="0 0 24 24"><path fill="#c6c6c6" stroke="#888" stroke-width="1" d="M11 2 L4 9 L11 14 Z M13 2 L20 9 L13 14 Z"/><path fill="#a0a0a0" stroke="#777" stroke-width="1" d="M2 15 Q8 24 18 18 L18 21 L23 15 L16 12 L17 15 Q9 19 4 13 Z"/></svg>
<svg class="ic" style="left:701.4px;top:124.0px" width="24" height="24" viewBox="0 0 24 24"><path fill="#7a7a7a" stroke="#555" stroke-width="1" d="M2 6 L12 2 L22 6 L22 14 L12 18 L2 14 Z"/><path fill="#aaa" d="M2.5 6 L12 2.5 L21.5 6 L12 10 Z"/><path fill="none" stroke="#888" stroke-width="1" d="M2 17 L12 22 L22 17 L12 13 Z"/></svg>
<svg class="ic" style="left:743.3px;top:126.0px" width="20" height="20" viewBox="0 0 24 24"><path fill="#fff" stroke="#7a7a7a" stroke-width="1.3" d="M4 2 H14 L19 7 V22 H4 Z"/><path fill="none" stroke="#7a7a7a" d="M14 2 V7 H19"/><path stroke="#7a7a7a" stroke-width="1.2" d="M17 15 V22 M13.5 18.5 H20.5"/></svg>
<svg class="ic" style="left:776.4px;top:125.8px" width="20.5" height="20.5" viewBox="0 0 24 24"><path fill="#fff" stroke="#333" stroke-width="1.5" d="M2 4 H9 L11 6 H21 V21 H2 Z"/><path fill="#222" d="M2 4 H9 L11 6 H21 V9 H8 L5 11 H2 Z"/></svg>
<svg class="ic" style="left:809.4px;top:125.8px" width="20.5" height="20.5" viewBox="0 0 24 24"><path fill="#fff" stroke="#444" stroke-width="1.6" d="M2 2 H18 L22 6 V22 H2 Z"/><rect x="6" y="2" width="10" height="6" fill="#fff" stroke="#444" stroke-width="1.4"/><rect x="12" y="3" width="2" height="4" fill="#444"/><rect x="5" y="13" width="14" height="9" fill="#fff" stroke="#444" stroke-width="1.4"/></svg>
<svg class="ic" style="left:849.5px;top:126.0px" width="20" height="20" viewBox="0 0 24 24"><path fill="none" stroke="#333" stroke-width="1.5" d="M4 9 Q8 3 14 5 Q20 8 18 15 Q16 21 10 21"/><path fill="none" stroke="#333" stroke-width="1.5" d="M3 3 L4 9.5 L10 8"/></svg>
<svg class="ic" style="left:894.0px;top:126.0px" width="20" height="20" viewBox="0 0 24 24"><path fill="none" stroke="#888" stroke-width="1.5" d="M20 9 Q16 3 10 5 Q4 8 6 15 Q8 21 14 21"/><path fill="none" stroke="#888" stroke-width="1.5" d="M21 3 L20 9.5 L14 8"/></svg>
<svg class="ic" style="left:945.5px;top:125.5px" width="21" height="21" viewBox="0 0 24 24"><path fill="none" stroke="#888" stroke-width="1.4" d="M5 16 Q2 9 8 5 Q13 2 18 5 M19 8 Q22 15 16 19 Q11 22 6 19"/><path fill="none" stroke="#888" stroke-width="1.4" d="M15 2 L18.5 5 L15 8 M9 16 L5.5 19 L9 22"/></svg>
<div class="dd" style="left:328.4px;top:134.0px;border-top-color:#8d8f90"></div>
<div class="dd" style="left:877.0px;top:134.0px;border-top-color:#707070"></div>
<div class="dd" style="left:921.8px;top:134.0px;border-top-color:#a0a0a0"></div>
<div class="vs" style="left:259px;top:125px"></div>
<div class="vs" style="left:343px;top:125px"></div>
<div class="vs" style="left:417px;top:125px"></div>
<div class="vs" style="left:555px;top:125px"></div>
<div class="vs" style="left:695px;top:125px"></div>
<div class="vs" style="left:938px;top:125px"></div>
<div class="a t" style="left:23px;top:159px;letter-spacing:0.403px;">Combo View</div>
<div class="a" style="left:20px;top:177px;width:61px;height:26px;background:linear-gradient(#e9eaeb,#dfe0e1);border:1px solid #b9babb;border-bottom:none;border-radius:3px 3px 0 0"></div>
<div class="a t" style="left:31px;top:184px;letter-spacing:0.397px;">Model</div>
<div class="a" style="left:80px;top:175px;width:77px;height:29px;background:#fcfcfc;border:1px solid #b4b5b6;border-bottom:none;border-radius:4px 4px 0 0"></div>
<svg class="ic" style="left:92px;top:180px" width="17" height="17" viewBox="0 0 17 17"><path fill="#28487c" stroke="#142a50" stroke-width="0.9" d="M1 4 L4 1 L14 11 L11 14 Z"/><path fill="#fff" stroke="#1d3d6a" stroke-width="0.8" d="M11 14 L14 11 L15.5 15.5 Z"/><path fill="#1d3d6a" d="M14 14 L15.5 15.5 L13.5 15.2Z"/><path stroke="#7ba0d0" stroke-width="1" d="M3 3 L12 12"/></svg>
<div class="a t" style="left:112px;top:183px;letter-spacing:0.040px;">Tasks</div>
<div class="a" style="left:21px;top:203px;width:502px;height:329px;border:1px solid #b5b6b7;border-right:1px solid #a9aaab;background:#f4f5f5"></div>
<div class="a" style="left:23px;top:204px;width:498px;height:326px;background:linear-gradient(#e8e8e8 0px,#b3b3b3 36px,#8e8e8e 70px,#7d7d7d 150px,#777 250px,#777 326px)"></div>
<div class="a" style="left:31px;top:240px;width:490px;height:283px;background:#eff0f1;border-radius:4px 0 0 0;overflow:hidden"><div class="a" style="left:0;top:0;width:490px;height:24px;background:linear-gradient(90deg,#43a7e2,#5cb9ec 45%,#90d4fb);border-top:1px solid #9ed4f2"></div></div>
<svg class="ic" style="left:36px;top:243px" width="18" height="18" viewBox="0 0 18 18"><path fill="#e0141c" stroke="#8a0a10" stroke-width="0.7" d="M1.6 1.4 H9.8 V5.4 H5 V7.4 H9 V10.4 H5 V16.3 H1.6 Z"/><path fill="#5b78bd" stroke="#1f3a78" stroke-width="0.8" stroke-linejoin="round" d="M14.41 10.19 L16.16 10.35 L16.16 11.65 L14.41 11.81 L13.92 12.98 L15.05 14.33 L14.13 15.25 L12.78 14.12 L11.61 14.61 L11.45 16.36 L10.15 16.36 L9.99 14.61 L8.82 14.12 L7.47 15.25 L6.55 14.33 L7.68 12.98 L7.19 11.81 L5.44 11.65 L5.44 10.35 L7.19 10.19 L7.68 9.02 L6.55 7.67 L7.47 6.75 L8.82 7.88 L9.99 7.39 L10.15 5.64 L11.45 5.64 L11.61 7.39 L12.78 7.88 L14.13 6.75 L15.05 7.67 L13.92 9.02Z"/><circle cx="10.8" cy="11" r="1.7" fill="#47aee8" stroke="#1f3a78" stroke-width="0.8"/></svg>
<div class="a t" style="left:55px;top:245.5px;color:#fff;font-weight:bold;font-size:13px;letter-spacing:0.5px">Roof</div>
<div class="a" style="left:31px;top:264px;width:490px;height:259px;overflow:hidden">
<div class="a t" style="left:13.5px;top:15px;letter-spacing:0.476px">Parameters of the roof profiles :</div>
<div class="a t" style="left:13.5px;top:29px;letter-spacing:0.536px">* Angle : slope in degrees relative to the horizontal.</div>
<div class="a t" style="left:13.5px;top:43px;letter-spacing:0.540px">* Run : horizontal distance between the wall and the ridge.</div>
<div class="a t" style="left:13.5px;top:57px;letter-spacing:0.460px">* Thickness : thickness of the roof.</div>
<div class="a t" style="left:13.5px;top:71px;letter-spacing:0.552px">* Overhang : horizontal distance between the eave and the wall.</div>
<div class="a t" style="left:13.5px;top:85px;letter-spacing:0.577px">* Height : height of the ridge above the base (calculated automatically).</div>
<div class="a t" style="left:13.5px;top:99px;letter-spacing:0.516px">* IdRel : Id of the relative profile used for automatic calculations.</div>
<div class="a t" style="left:13.5px;top:113px;letter-spacing:0.167px">---</div>
<div class="a t" style="left:13.5px;top:127px;letter-spacing:0.583px">If Angle = 0 and Run = 0 then the profile is identical to the relative profile.</div>
<div class="a t" style="left:13.5px;top:141px;letter-spacing:0.568px">If Angle = 0 then the angle is calculated so that the height is the same as the relative profile.</div>
<div class="a t" style="left:13.5px;top:155px;letter-spacing:0.555px">If Run = 0 then the run is calculated so that the height is the same as the relative profile.</div>
<div class="a" style="left:14px;top:175px;width:480px;height:70px;background:#fcfcfc;border:1px solid #bcbdbe;border-right:none"></div>
<div class="a" style="left:15px;top:176px;width:480px;height:18px;background:linear-gradient(#f9f9f9,#ebeced);border-bottom:1px solid #b9babb"></div>
<div class="a" style="left:14.3px;top:176px;width:35.8px;height:18px;overflow:hidden"><div class="a t" style="left:2.5px;top:3px;letter-spacing:0.366px">Id</div></div>
<div class="a" style="left:50.6px;top:176px;width:1px;height:18px;background:#c6c7c8"></div>
<div class="a" style="left:51.1px;top:176px;width:69.1px;height:18px;overflow:hidden"><div class="a t" style="left:2.5px;top:3px;letter-spacing:0.484px">Angle (deg)</div></div>
<div class="a" style="left:120.7px;top:176px;width:1px;height:18px;background:#c6c7c8"></div>
<div class="a" style="left:121.2px;top:176px;width:61.1px;height:18px;overflow:hidden"><div class="a t" style="left:2.5px;top:3px;letter-spacing:0.502px">Run (mm)</div></div>
<div class="a" style="left:182.8px;top:176px;width:1px;height:18px;background:#c6c7c8"></div>
<div class="a" style="left:183.3px;top:176px;width:36.2px;height:18px;overflow:hidden"><div class="a t" style="left:2.5px;top:3px;letter-spacing:0.098px">IdRel</div></div>
<div class="a" style="left:220.0px;top:176px;width:1px;height:18px;background:#c6c7c8"></div>
<div class="a" style="left:220.5px;top:176px;width:59.2px;height:18px;overflow:hidden"><div class="a t" style="left:2.5px;top:3px;letter-spacing:0.498px">Thickness (mm)</div></div>
<div class="a" style="left:280.2px;top:176px;width:1px;height:18px;background:#c6c7c8"></div>
<div class="a" style="left:280.7px;top:176px;width:58.7px;height:18px;overflow:hidden"><div class="a t" style="left:2.5px;top:3px;letter-spacing:0.606px">Overhang (mm)</div></div>
<div class="a" style="left:339.9px;top:176px;width:1px;height:18px;background:#c6c7c8"></div>
<div class="a" style="left:340.4px;top:176px;width:227.6px;height:18px;overflow:hidden"><div class="a t" style="left:2.5px;top:3px;letter-spacing:0.679px">Height (mm)</div></div>
<div class="a t" style="left:17.5px;top:197.0px;letter-spacing:0.683px">6</div>
<div class="a t" style="left:55.0px;top:197.0px;letter-spacing:0.597px">45.0</div>
<div class="a t" style="left:125.0px;top:197.0px;letter-spacing:0.614px">250.0</div>
<div class="a t" style="left:186.0px;top:197.0px;letter-spacing:0.425px">-1</div>
<div class="a t" style="left:223.5px;top:197.0px;letter-spacing:0.597px">50.0</div>
<div class="a t" style="left:283.0px;top:197.0px;letter-spacing:0.614px">100.0</div>
<div class="a t" style="left:343.0px;top:197.0px;letter-spacing:0.664px">249.99999999999997</div>
<div class="a t" style="left:17.5px;top:211.7px;letter-spacing:0.683px">7</div>
<div class="a t" style="left:55.0px;top:211.7px;letter-spacing:0.597px">45.0</div>
<div class="a t" style="left:125.0px;top:211.7px;letter-spacing:0.614px">250.0</div>
<div class="a t" style="left:186.0px;top:211.7px;letter-spacing:0.425px">-1</div>
<div class="a t" style="left:223.5px;top:211.7px;letter-spacing:0.597px">50.0</div>
<div class="a t" style="left:283.0px;top:211.7px;letter-spacing:0.614px">100.0</div>
<div class="a t" style="left:343.0px;top:211.7px;letter-spacing:0.664px">249.99999999999997</div>
<div class="a t" style="left:17.5px;top:226.4px;letter-spacing:0.683px">8</div>
<div class="a t" style="left:55.0px;top:226.4px;letter-spacing:0.597px">45.0</div>
<div class="a t" style="left:125.0px;top:226.4px;letter-spacing:0.614px">250.0</div>
<div class="a t" style="left:186.0px;top:226.4px;letter-spacing:0.425px">-1</div>
<div class="a t" style="left:223.5px;top:226.4px;letter-spacing:0.597px">50.0</div>
<div class="a t" style="left:283.0px;top:226.4px;letter-spacing:0.614px">100.0</div>
<div class="a t" style="left:343.0px;top:226.4px;letter-spacing:0.664px">249.99999999999997</div>
<div class="a t" style="left:17.5px;top:241.1px;letter-spacing:0.683px">9</div>
<div class="a t" style="left:55.0px;top:241.1px;letter-spacing:0.597px">45.0</div>
<div class="a t" style="left:125.0px;top:241.1px;letter-spacing:0.614px">250.0</div>
<div class="a t" style="left:186.0px;top:241.1px;letter-spacing:0.425px">-1</div>
<div class="a t" style="left:223.5px;top:241.1px;letter-spacing:0.597px">50.0</div>
<div class="a t" style="left:283.0px;top:241.1px;letter-spacing:0.614px">100.0</div>
<div class="a t" style="left:343.0px;top:241.1px;letter-spacing:0.664px">249.99999999999997</div>
<div class="a" style="left:15px;top:244px;width:480px;height:15px;background:#eff0f1;border-top:1px solid #bcbdbe"></div>
</div>
<svg class="a" style="left:529px;top:156px" width="855" height="373" viewBox="529 156 855 373"><rect x="529" y="156" width="855" height="373" fill="#98aabb"/><path d="M551.79 156V529M576.76 156V529M601.73 156V529M651.67 156V529M676.64 156V529M701.61 156V529M529 155.81H1384M726.58 156V529M529 180.78H1384M751.55 156V529M529 205.75H1384M776.52 156V529M529 230.72H1384M801.49 156V529M529 255.69H1384M826.46 156V529M529 280.66H1384M851.43 156V529M529 305.63H1384M901.37 156V529M529 355.57H1384M926.34 156V529M529 380.54H1384M951.31 156V529M529 405.51H1384M976.28 156V529M529 430.48H1384M1001.25 156V529M529 455.45H1384M1026.22 156V529M529 480.42H1384M1051.19 156V529M529 505.39H1384M1076.16 156V529M529 530.36H1384M1101.13 156V529M1151.07 156V529M1176.04 156V529M1201.01 156V529M1225.98 156V529M1250.95 156V529M1275.92 156V529M1300.89 156V529M1325.86 156V529M1350.83 156V529" stroke="#8595a6" stroke-width="1.15" fill="none"/><path d="M626.70 156V529M876.40 156V529M529 330.60H1384M1126.10 156V529M1375.80 156V529" stroke="#6f7f8f" stroke-width="1.3" fill="none"/><path d="M876.4 156V529" stroke="#1fa82e" stroke-width="1.4"/><path d="M529 330.6H1384" stroke="#b8282a" stroke-width="1.3"/><g fill="none" stroke-linecap="square" stroke-linejoin="miter"><path d="M712 275.5H754.2V440" stroke="#0e0e0e" stroke-width="4.6"/><path d="M754 306H1036" stroke="#0e0e0e" stroke-width="4.6"/><path d="M844.5 216V306" stroke="#0e0e0e" stroke-width="4.6"/><path d="M712 338.5H752" stroke="#0e0e0e" stroke-width="4.6"/><path d="M738.8 340V352.5H754" stroke="#0e0e0e" stroke-width="4"/><path d="M802 440V336H982 V440" stroke="#0e0e0e" stroke-width="4.2"/><path d="M803.5 350.5H816V337" stroke="#0e0e0e" stroke-width="3.6"/><path d="M984 360.5H1124" stroke="#0e0e0e" stroke-width="3.6"/><path d="M1043 307.5H1124" stroke="#0e0e0e" stroke-width="4"/><path d="M599.5 399H674" stroke="#0e0e0e" stroke-width="4"/><path d="M624.4 401V440" stroke="#0e0e0e" stroke-width="4"/><path d="M588 409.5H570.5V429.5H588" stroke="#0e0e0e" stroke-width="5"/><path d="M1166.5 210.5H1173.2V259.5L1134.5 300" stroke="#0e0e0e" stroke-width="4"/><path d="M675.5 341V470" stroke="#0e0e0e" stroke-width="7"/><path d="M1039.6 216V358" stroke="#0e0e0e" stroke-width="7"/><path d="M1366.5 283V372" stroke="#0e0e0e" stroke-width="2.2"/><path d="M1360.8 430V529" stroke="#0e0e0e" stroke-width="2.4"/><path d="M1359.5 497V500" stroke="#0e0e0e" stroke-width="2.4"/><path d="M1369.5 230.5H1384" stroke="#0e0e0e" stroke-width="4"/><path d="M1383.5 230V268L1376.5 278H1367V271.5" stroke="#0e0e0e" stroke-width="3.6"/><path d="M1366.5 377L1376.5 386.5V429.5H1359" stroke="#0e0e0e" stroke-width="3.6"/><path d="M712 275.5H754.2V440" stroke="#8f8f8f" stroke-width="1.4" stroke-linecap="butt"/><path d="M754 306H1036" stroke="#8f8f8f" stroke-width="1.4" stroke-linecap="butt"/><path d="M844.5 216V306" stroke="#a8a8a8" stroke-width="1.5" stroke-linecap="butt"/><path d="M712 338.5H752" stroke="#8f8f8f" stroke-width="1.4" stroke-linecap="butt"/><path d="M738.8 340V352.5H754" stroke="#8f8f8f" stroke-width="1.4" stroke-linecap="butt"/><path d="M802 440V336H982 V440" stroke="#8f8f8f" stroke-width="1.4" stroke-linecap="butt"/><path d="M803.5 350.5H816V337" stroke="#8f8f8f" stroke-width="1.4" stroke-linecap="butt"/><path d="M984 360.5H1124" stroke="#8f8f8f" stroke-width="1.4" stroke-linecap="butt"/><path d="M1043 307.5H1124" stroke="#8f8f8f" stroke-width="1.4" stroke-linecap="butt"/><path d="M599.5 399H674" stroke="#8f8f8f" stroke-width="1.4" stroke-linecap="butt"/><path d="M624.4 401V440" stroke="#8f8f8f" stroke-width="1.4" stroke-linecap="butt"/><path d="M588 409.5H570.5V429.5H588" stroke="#dcdcdc" stroke-width="1.2" stroke-linecap="butt"/><path d="M1166.5 210.5H1173.2V259.5L1134.5 300" stroke="#b9b9b9" stroke-width="1.4" stroke-linecap="butt"/><path d="M675.5 341V470" stroke="#dcdcdc" stroke-width="3.6" stroke-linecap="butt"/><path d="M1039.6 216V358" stroke="#dedede" stroke-width="4" stroke-linecap="butt"/><path d="M1369.5 230.5H1384" stroke="#c8c8c8" stroke-width="1.6" stroke-linecap="butt"/><path d="M1383.5 230V268L1376.5 278H1367V271.5" stroke="#e0e0e0" stroke-width="1.6" stroke-linecap="butt"/><path d="M1366.5 377L1376.5 386.5V429.5H1359" stroke="#d8d8d8" stroke-width="1.6" stroke-linecap="butt"/></g><path d="M879.5 338V420" fill="none" stroke="#0c0c0c" stroke-width="4.4"/><path d="M879.5 338V421" fill="none" stroke="#d8d8d8" stroke-width="1.8"/><path d="M878.9 440V420.1H932.2V440" fill="none" stroke="#0c0c0c" stroke-width="1.9"/><path d="M881.2 440V422.6H929.9V440" fill="none" stroke="#e2e2e2" stroke-width="3.4"/><path d="M883.8 440V425.7H927.3V440 M921.6 426V440" fill="none" stroke="#0c0c0c" stroke-width="1.6"/><rect x="676" y="468" width="4" height="4" fill="#161616"/><rect x="1366" y="380" width="4" height="4" fill="#161616"/><rect x="1369" y="227.5" width="4" height="5" fill="#161616"/><path d="M741.7 278V295 M724 278A17.7 17.7 0 0 0 741.7 295.7 M758.6 305V286.5 A18.5 18.5 0 0 1 777.1 305 M756 356H773.6 A17.6 17.6 0 0 1 756 373.6 M803.5 356H821.5 A18 18 0 0 1 803.5 374 M924.6 304V286 A18.5 18.5 0 0 1 943.1 304 M924.6 334V316 A18.5 18.5 0 0 1 943.1 334 M1006.7 362V381 M986.5 362A20.2 20.2 0 0 0 1006.7 382 M622.6 414.4H607 A15.6 15.6 0 0 0 622.6 430 M649.3 400.7V418.5 M630.5 400.7A18.8 18.8 0 0 0 649.3 419.5 M902 426.5 A18 18 0 0 0 913 440 M1036 241.8 L1024.3 253 Q1030 257 1036 258.3 Q1029 260 1024.3 265 L1036 275.6 M1036 282.8 L1024.3 294 Q1030 299 1036 299.7" fill="none" stroke="#151515" stroke-width="1.2"/><path d="M1043.5 300.4H1120.3V216" fill="none" stroke="#222" stroke-width="1.3"/><path d="M1044.5 306V301.8H1047.5V304.5 M1044.5 352V357H1047" fill="none" stroke="#111" stroke-width="1.8"/><path d="M1043.5 313H1079.4V353H1043.5" fill="none" stroke="#1e1e1e" stroke-width="1.3"/><rect x="1079.5" y="373.5" width="46" height="61" fill="#d2d2d2" stroke="#2a2a2a" stroke-width="1.2"/><path d="M1080 398.3H1125 M1080 423.3H1125 M1101.3 374V434" stroke="#c0c0c0" stroke-width="1"/><path d="M1133 373.5H1201V435H1133" fill="none" stroke="#262626" stroke-width="1.6"/><path d="M706.50 210.55 L917.00 210.55 L917.00 175.30 L1040.40 175.30 L1040.40 210.55 L1129.30 210.55 L1129.30 445.55 L594.00 445.55 L594.00 337.00 L706.50 337.00Z" fill="none" stroke="#70f58a" stroke-width="10.7" stroke-linejoin="miter"/><path d="M707.10 211.15 L917.60 211.15 L917.60 175.90 L1039.80 175.90 L1039.80 211.15 L1128.70 211.15 L1128.70 444.95 L594.60 444.95 L594.60 337.60 L707.10 337.60Z" fill="none" stroke="#8ff9a4" stroke-width="5.0" stroke-linejoin="miter"/><path d="M703.80 207.85 L914.30 207.85 L914.30 172.60 L1043.10 172.60 L1043.10 207.85 L1132.00 207.85 L1132.00 448.25 L591.30 448.25 L591.30 334.30 L703.80 334.30Z" fill="none" stroke="#74d68a" stroke-width="1.3" stroke-linejoin="miter"/><path d="M701.15 205.20L711.85 215.90M911.65 205.20L922.35 215.90M911.65 169.95L922.35 180.65M1045.75 169.95L1035.05 180.65M1045.75 205.20L1035.05 215.90M1134.65 205.20L1123.95 215.90M1134.65 450.90L1123.95 440.20M588.65 450.90L599.35 440.20M588.65 331.65L599.35 342.35M701.15 331.65L711.85 342.35" stroke="#70dd88" stroke-width="1.2"/><rect x="698.7" y="202.7" width="4.6" height="4.6" fill="#80f096"/><rect x="909.2" y="167.5" width="4.6" height="4.6" fill="#80f096"/><rect x="1043.7" y="167.5" width="4.6" height="4.6" fill="#80f096"/><rect x="920.2" y="213.7" width="4.6" height="4.6" fill="#80f096"/><rect x="1032.2" y="213.7" width="4.6" height="4.6" fill="#80f096"/><rect x="1132.4" y="203.0" width="4.6" height="4.6" fill="#80f096"/><rect x="1132.2" y="448.6" width="4.6" height="4.6" fill="#80f096"/><rect x="586.0" y="448.7" width="4.6" height="4.6" fill="#80f096"/><rect x="586.0" y="329.5" width="4.6" height="4.6" fill="#80f096"/><rect x="709.7" y="340.0" width="4.6" height="4.6" fill="#80f096"/></svg>
<svg class="ic" style="left:1318px;top:156px" width="66" height="66" viewBox="1318 156 66 66">
<path d="M1343 174.4 H1363.2 L1367.8 179 V199.2 L1363.2 203.8 H1343 L1338.4 199.2 V179 Z" fill="#cdd5dd" stroke="#1e1e1e" stroke-width="1.2"/>
<rect x="1342.7" y="178.7" width="20.7" height="20.7" rx="2.5" fill="#c2ccd6" stroke="#1e1e1e" stroke-width="1.1"/>
<path d="M1345.5 174.6 V178.7 M1360.5 174.6 V178.7 M1345.5 199.4 V203.6 M1360.5 199.4 V203.6 M1338.6 181.5 H1342.7 M1338.6 196.5 H1342.7 M1363.4 181.5 H1367.6 M1363.4 196.5 H1367.6" stroke="#1e1e1e" stroke-width="1"/>
<text x="1353.2" y="191.4" font-size="7" text-anchor="middle" fill="#7a7f85" font-family="Liberation Sans" letter-spacing="-0.2">TOP</text>
<path d="M1337.4 180.8 V204.3" stroke="#00e000" stroke-width="1.5"/><path d="M1338 204.8 H1361" stroke="#f00000" stroke-width="1.8"/><rect x="1336.2" y="203.4" width="2.4" height="2.4" fill="#1010e0"/>
<path d="M1348.3 165.3 L1352.9 159.1 L1358.5 165.3 Z M1348.3 213 L1353 218.5 L1358.5 213 Z M1323.1 188.9 L1329.3 183.9 L1329.3 193.8 Z M1382.7 189 L1377 184 L1377 194 Z" fill="#c8d0d8" stroke="#1e1e1e" stroke-width="1"/>
<path d="M1344.5 162.5 Q1337 164.5 1332.5 170 L1330.5 168.5 L1330.3 174.5 L1336 173.5 L1334.5 172 Q1338.5 168 1345.5 166.5 Z" fill="#c8d0d8" stroke="#1e1e1e" stroke-width="0.9"/>
<path d="M1361.5 162.5 Q1369 164.5 1373.5 170 L1375.5 168.5 L1375.7 174.5 L1370 173.5 L1371.5 172 Q1367.5 168 1360.5 166.5 Z" fill="#c8d0d8" stroke="#1e1e1e" stroke-width="0.9"/>
<circle cx="1378.3" cy="162.8" r="2.6" fill="#c8d0d8" stroke="#1e1e1e" stroke-width="0.9"/>
<path d="M1368.5 207 L1373 205 L1377.5 207 V212.5 L1373 214.5 L1368.5 212.5 Z M1368.5 207 L1373 209 L1377.5 207 M1373 209 V214.5" fill="#c8d0d8" stroke="#1e1e1e" stroke-width="0.9"/>
</svg>
<svg class="ic" style="left:1360px;top:486px" width="24" height="30" viewBox="1360 486 24 30">
<path d="M1367.5 510.5 V499" stroke="#2a9a2a" stroke-width="1.2"/><path d="M1365.5 501 L1367.5 497.5 L1369.5 501 Z" fill="#2a9a2a"/>
<path d="M1367.5 510.5 H1378" stroke="#b03030" stroke-width="1.2"/><path d="M1377 508.5 L1380.5 510.5 L1377 512.5 Z" fill="#b03030"/>
<circle cx="1367.5" cy="510.5" r="1.6" fill="#2020c0"/>
<text x="1369.5" y="497.5" font-size="9.5" fill="#111" font-family="Liberation Sans">Y</text>
<text x="1369.5" y="508" font-size="9.5" fill="#111" font-family="Liberation Sans">Z</text>
<text x="1381" y="511.5" font-size="9.5" fill="#111" font-family="Liberation Sans">X</text>
</svg>
<div class="a" style="left:529px;top:529px;width:855px;height:3px;background:#eff0f1"></div>
<div class="a" style="left:530px;top:530px;width:147px;height:1px;background:#fcfcfc"></div>
<div class="a" style="left:677px;top:530px;width:707px;height:2px;background:#fcfcfc;border-left:1px solid #bbb;border-top:1px solid #bbb"></div>
<div class="a" style="left:172px;top:159px;width:519px;height:97px;background:#232627;border:1px solid #f4f4f4;box-shadow:inset 0 0 0 1px #141617"></div>
<div class="a t" style="left:176px;top:163px;color:#eff0f1;-webkit-text-stroke:0.05px currentColor;letter-spacing:0.804px;font-weight:bold"><b>Offset</b></div>
<div class="a t" style="left:222px;top:163px;color:#eff0f1;-webkit-text-stroke:0.05px currentColor;letter-spacing:0.120px;">(O, S)</div>
<div class="a t" style="left:176px;top:186px;color:#eff0f1;-webkit-text-stroke:0.05px currentColor;letter-spacing:0.510px;">Offsets of the selected object.</div>
<div class="a t" style="left:176px;top:201px;color:#eff0f1;-webkit-text-stroke:0.05px currentColor;letter-spacing:0.521px;">It can also create an offset copy of the original object.</div>
<div class="a t" style="left:176px;top:216px;color:#eff0f1;-webkit-text-stroke:0.05px currentColor;letter-spacing:0.394px;">CTRL to snap, SHIFT to constrain. Hold ALT and click to create a copy with each click.</div>
<div class="a t" style="left:176px;top:239px;color:#eff0f1;-webkit-text-stroke:0.05px currentColor;letter-spacing:0.460px;font-style:italic">Draft_Offset</div>
</body></html>
